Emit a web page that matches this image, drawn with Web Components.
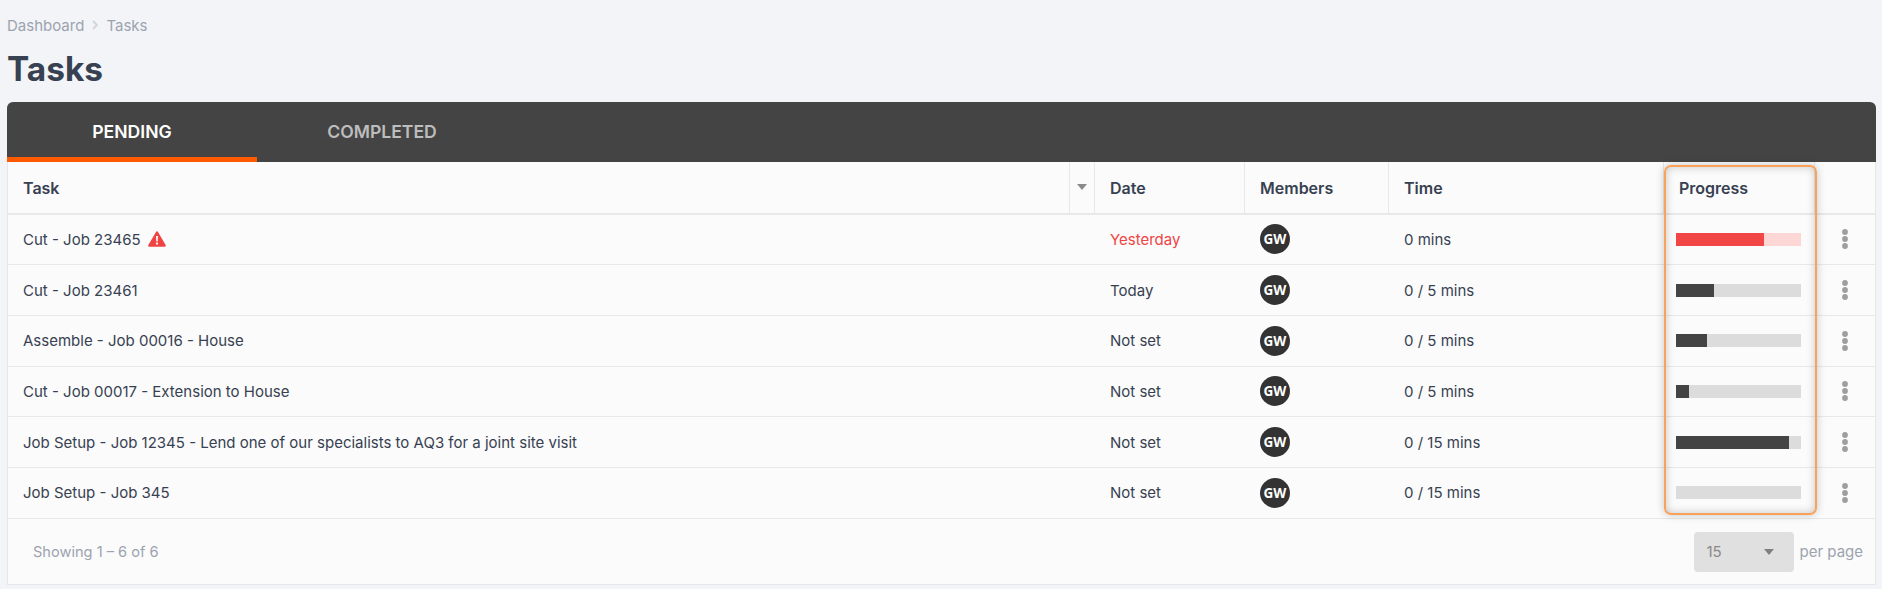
<!DOCTYPE html>
<html>
<head>
<meta charset="utf-8">
<title>Tasks</title>
<style>
    html, body { margin: 0; height: 100%; overflow: hidden; background: #f3f4f8; }
    body { font-family: Inter, "Liberation Sans", sans-serif; color: #374151; }
    task-page { --cols: 1062px 25px 150px 144px 275px 151px 1fr; }
</style>
</head>
<body>
<task-page>
    <task-panel>
        <task-tabs></task-tabs>
        <task-head></task-head>
        <task-row name="Cut - Job 23465" date="Yesterday" time="0 mins" progress="70.4" overdue></task-row>
        <task-row name="Cut - Job 23461" date="Today" time="0 / 5 mins" progress="30.4"></task-row>
        <task-row name="Assemble - Job 00016 - House" date="Not set" time="0 / 5 mins" progress="24.8"></task-row>
        <task-row name="Cut - Job 00017 - Extension to House" date="Not set" time="0 / 5 mins" progress="10.4"></task-row>
        <task-row name="Job Setup - Job 12345 - Lend one of our specialists to AQ3 for a joint site visit" date="Not set" time="0 / 15 mins" progress="90.4"></task-row>
        <task-row name="Job Setup - Job 345" date="Not set" time="0 / 15 mins" progress="0"></task-row>
        <task-footer></task-footer>
    </task-panel>
</task-page>

<script>
class TaskPage extends HTMLElement {
    constructor() {
        super();
        this.attachShadow({ mode: 'open' });
        this.shadowRoot.innerHTML = `
            <style>
                :host { display: block; padding: 16px 6px 0 7px; }
                .crumbs {
                    display: flex;
                    align-items: center;
                    gap: 7px;
                    height: 18px;
                    font-size: 15px;
                    color: #9ca3af;
                }
                .crumbs svg { width: 8px; height: 10px; }
                h1 {
                    margin: 15px 0 13px;
                    font-size: 33.4px;
                    line-height: 40px;
                    font-weight: 700;
                    color: #374151;
                }
            </style>
            <div class="crumbs">
                <span>Dashboard</span>
                <svg viewBox="0 0 8 10"><path d="M2 1l4 4-4 4" fill="none" stroke="#d1d5db" stroke-width="1.8"/></svg>
                <span>Tasks</span>
            </div>
            <h1>Tasks</h1>
            <slot></slot>
        `;
    }
}

class TaskPanel extends HTMLElement {
    constructor() {
        super();
        this.attachShadow({ mode: 'open' });
        this.shadowRoot.innerHTML = `
            <style>
                :host {
                    display: block;
                    position: relative;
                    background: #fbfbfb;
                    border-radius: 6px 6px 0 0;
                    box-shadow: inset 1px 0 0 #e5e7eb, inset -1px 0 0 #e5e7eb, inset 0 -1px 0 #e5e7eb;
                }
                .highlight {
                    position: absolute;
                    left: 1657px;
                    top: 63px;
                    width: 149px;
                    height: 346px;
                    border: 2px solid #f8a25c;
                    border-radius: 7px;
                    box-shadow: 0 0 8px rgba(0,0,0,.22), inset 0 0 8px rgba(0,0,0,.22);
                    pointer-events: none;
                }
            </style>
            <slot></slot>
            <div class="highlight"></div>
        `;
    }
}

class TaskTabs extends HTMLElement {
    constructor() {
        super();
        this.attachShadow({ mode: 'open' });
        this.shadowRoot.innerHTML = `
            <style>
                :host {
                    display: flex;
                    height: 60px;
                    background: #444444;
                    border-radius: 6px 6px 0 0;
                }
                div {
                    width: 250px;
                    display: flex;
                    align-items: center;
                    justify-content: center;
                    padding-bottom: 2px;
                    box-sizing: border-box;
                    font-size: 17.6px;
                    font-weight: 600;
                    color: #bdbdbd;
                }
                .active { color: #fff; box-shadow: inset 0 -5px 0 #ff5a00; }
            </style>
            <div class="active">PENDING</div>
            <div>COMPLETED</div>
        `;
    }
}

class TaskHead extends HTMLElement {
    constructor() {
        super();
        this.attachShadow({ mode: 'open' });
        this.shadowRoot.innerHTML = `
            <style>
                :host {
                    display: grid;
                    grid-template-columns: var(--cols);
                    height: 50.6px;
                    margin-left: 1px;
                    margin-right: 1px;
                    border-bottom: 2px solid #e8e8e8;
                    font-size: 16px;
                    font-weight: 600;
                    color: #374151;
                }
                div {
                    display: flex;
                    align-items: center;
                    padding: 2px 0 0 15px;
                    border-right: 1px solid #e8e8e8;
                    box-sizing: border-box;
                }
                .sort { padding: 0 0 0 7px; }
                .sort svg { width: 10px; height: 6px; }
                .last { border-right: 0; }
            </style>
            <div>Task</div>
            <div class="sort"><svg viewBox="0 0 10 6"><path d="M0 0h10L5 6z" fill="#8a8a8a"/></svg></div>
            <div>Date</div>
            <div>Members</div>
            <div>Time</div>
            <div>Progress</div>
            <div class="last"></div>
        `;
    }
}

class TaskRow extends HTMLElement {
    connectedCallback() {
        if (this.shadowRoot) return;
        this.attachShadow({ mode: 'open' });
        const overdue = this.hasAttribute('overdue');
        const warn = overdue ? `
            <svg class="warn" viewBox="0 0 18 16">
                <path d="M9 1.6L1.4 14.6h15.2z" fill="#ef4444" stroke="#ef4444" stroke-width="2.4" stroke-linejoin="round"/>
                <path d="M8 5h2l-.3 5.4H8.3z" fill="#fbfbfb"/>
                <circle cx="9" cy="12.6" r="1.15" fill="#fbfbfb"/>
            </svg>` : '';
        this.shadowRoot.innerHTML = `
            <style>
                :host {
                    display: grid;
                    grid-template-columns: var(--cols);
                    height: 50.67px;
                    margin: 0 1px;
                    box-sizing: border-box;
                    border-bottom: 1px solid #e8e8e8;
                    font-size: 15px;
                    color: #374151;
                }
                div { display: flex; align-items: center; padding-left: 15px; min-width: 0; }
                .name { grid-column: span 2; }
                .warn { width: 18px; height: 16px; margin-left: 7px; }
                .late { color: #ef4444; }
                .avatar {
                    width: 30px;
                    height: 30px;
                    padding: 0;
                    border-radius: 50%;
                    justify-content: center;
                    background: #333333;
                    color: #fff;
                    font: 700 13.5px "Open Sans", sans-serif;
                }
                .cell { padding-left: 15px; }
                .bar-cell { padding-left: 12px; }
                .track { width: 125px; height: 13px; padding: 0; display: block; background: #dcdcdc; }
                .fill { height: 100%; padding: 0; display: block; background: #444444; }
                .track.late-bar { background: #fdd6d6; }
                .late-bar .fill { background: #f24646; }
                .menu { padding: 0 0 0 27px; }
                .menu svg { width: 6px; height: 20px; }
            </style>
            <div class="name">${this.getAttribute('name')}${warn}</div>
            <div class="${overdue ? 'late' : ''}">${this.getAttribute('date')}</div>
            <div class="cell"><div class="avatar">GW</div></div>
            <div>${this.getAttribute('time')}</div>
            <div class="bar-cell">
                <div class="track ${overdue ? 'late-bar' : ''}">
                    <div class="fill" style="width:${this.getAttribute('progress')}%"></div>
                </div>
            </div>
            <div class="menu">
                <svg viewBox="0 0 6 20">
                    <circle cx="3" cy="3" r="2.9" fill="#9e9e9e"/>
                    <circle cx="3" cy="10" r="2.9" fill="#9e9e9e"/>
                    <circle cx="3" cy="17" r="2.9" fill="#9e9e9e"/>
                </svg>
            </div>
        `;
    }
}

class TaskFooter extends HTMLElement {
    constructor() {
        super();
        this.attachShadow({ mode: 'open' });
        this.shadowRoot.innerHTML = `
            <style>
                :host {
                    display: flex;
                    align-items: center;
                    justify-content: space-between;
                    height: 66.4px;
                    padding: 0 13px 0 26px;
                    box-sizing: border-box;
                    font-size: 14.6px;
                    color: #9ca3af;
                }
                .pager { display: flex; align-items: center; gap: 6px; }
                .select {
                    display: flex;
                    align-items: center;
                    justify-content: space-between;
                    width: 100px;
                    height: 40px;
                    padding: 0 20px 0 13px;
                    box-sizing: border-box;
                    background: #e0e0e0;
                    border-radius: 4px;
                    color: #8a8a8a;
                    font-size: 15px;
                }
                .select svg { width: 10px; height: 6px; }
                .pager > span { font-size: 15px; }
            </style>
            <span>Showing 1 – 6 of 6</span>
            <div class="pager">
                <div class="select">15<svg viewBox="0 0 10 6"><path d="M0 0h10L5 6z" fill="#808080"/></svg></div>
                <span>per page</span>
            </div>
        `;
    }
}

customElements.define('task-page', TaskPage);
customElements.define('task-panel', TaskPanel);
customElements.define('task-tabs', TaskTabs);
customElements.define('task-head', TaskHead);
customElements.define('task-row', TaskRow);
customElements.define('task-footer', TaskFooter);
</script>
</body>
</html>
